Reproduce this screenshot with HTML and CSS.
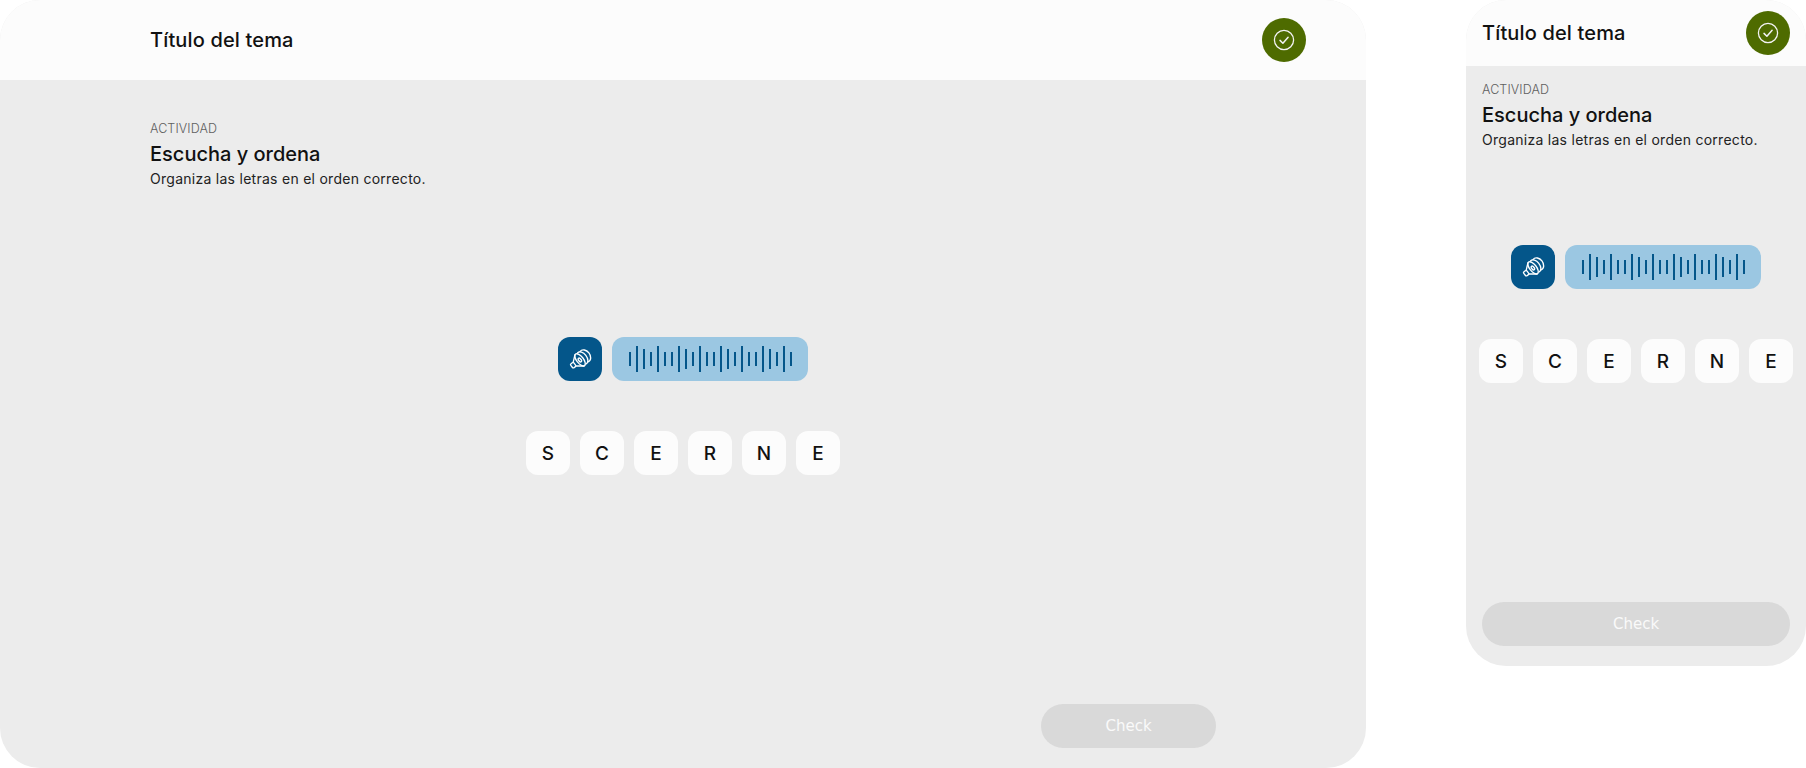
FILE: index.html
```html
<!DOCTYPE html>
<html lang="es">
<head>
    <meta charset="UTF-8">
    <meta name="viewport" content="width=device-width, initial-scale=1.0">
    <title>Escucha y ordena</title>
    <link rel="stylesheet" href="styles.css">
</head>
<body>

    <!-- Desktop preview -->
    <section class="panel panel-desktop">
        <header class="panel-header">
            <h1 class="topic-title">Título del tema</h1>
            <span class="done-badge">
                <svg width="24" height="24" viewBox="0 0 24 24" fill="none" stroke="currentColor" stroke-linecap="round" stroke-linejoin="round">
                    <circle cx="12" cy="12" r="9.6" stroke-width="1.3"/>
                    <path d="M8 12.4l2.9 2.8 5.2-6" stroke-width="1.5"/>
                </svg>
            </span>
        </header>
        <div class="activity-text">
            <p class="activity-label">ACTIVIDAD</p>
            <h2 class="activity-title">Escucha y ordena</h2>
            <p class="activity-hint">Organiza las letras en el orden correcto.</p>
        </div>
        <div class="game">
            <div class="audio-row">
                <button class="audio-btn">
                    <svg width="27" height="27" viewBox="0 0 24 24" fill="none" stroke="currentColor" stroke-width="1.2" stroke-linecap="round" stroke-linejoin="round">
                        <g transform="rotate(-38 12 12)">
                            <rect x="2" y="9.800" width="3.500" height="4.400" rx="1"/>
                            <path d="M5.500 9.800L10.800 5.600M5.500 14.200l5.300 4.200"/>
                            <ellipse cx="11.500" cy="12" rx="3" ry="6.500"/>
                            <ellipse cx="11.300" cy="12" rx="1.100" ry="2"/>
                            <path d="M13.500 5.800C16 5.200 18 8.500 18 12s-2 6.800-4.500 6.200"/>
                            <path d="M16 6.200c3.200-1 5.500 2.500 5.500 5.800s-2.300 6.800-5.500 5.800"/>
                        </g>
                    </svg>
                </button>
                <div class="wave">
                    <i class="s"></i><i class="t"></i><i class="m"></i><i class="s"></i><i class="t"></i><i class="s"></i>
                    <i class="s"></i><i class="t"></i><i class="m"></i><i class="s"></i><i class="t"></i><i class="s"></i>
                    <i class="s"></i><i class="t"></i><i class="m"></i><i class="s"></i><i class="t"></i><i class="s"></i>
                    <i class="s"></i><i class="t"></i><i class="m"></i><i class="s"></i><i class="t"></i><i class="s"></i>
                </div>
            </div>
            <div class="letters">
                <span class="letter">S</span>
                <span class="letter">C</span>
                <span class="letter">E</span>
                <span class="letter">R</span>
                <span class="letter">N</span>
                <span class="letter">E</span>
            </div>
        </div>
        <div class="panel-footer">
            <button class="check-btn" disabled>Check</button>
        </div>
    </section>

    <!-- Mobile preview -->
    <section class="panel panel-mobile">
        <header class="panel-header">
            <h1 class="topic-title">Título del tema</h1>
            <span class="done-badge">
                <svg width="24" height="24" viewBox="0 0 24 24" fill="none" stroke="currentColor" stroke-linecap="round" stroke-linejoin="round">
                    <circle cx="12" cy="12" r="9.6" stroke-width="1.3"/>
                    <path d="M8 12.4l2.9 2.8 5.2-6" stroke-width="1.5"/>
                </svg>
            </span>
        </header>
        <div class="activity-text">
            <p class="activity-label">ACTIVIDAD</p>
            <h2 class="activity-title">Escucha y ordena</h2>
            <p class="activity-hint">Organiza las letras en el orden correcto.</p>
        </div>
        <div class="game">
            <div class="audio-row">
                <button class="audio-btn">
                    <svg width="27" height="27" viewBox="0 0 24 24" fill="none" stroke="currentColor" stroke-width="1.2" stroke-linecap="round" stroke-linejoin="round">
                        <g transform="rotate(-38 12 12)">
                            <rect x="2" y="9.800" width="3.500" height="4.400" rx="1"/>
                            <path d="M5.500 9.800L10.800 5.600M5.500 14.200l5.300 4.200"/>
                            <ellipse cx="11.500" cy="12" rx="3" ry="6.500"/>
                            <ellipse cx="11.300" cy="12" rx="1.100" ry="2"/>
                            <path d="M13.500 5.800C16 5.200 18 8.500 18 12s-2 6.800-4.500 6.200"/>
                            <path d="M16 6.200c3.200-1 5.500 2.500 5.500 5.800s-2.300 6.800-5.500 5.800"/>
                        </g>
                    </svg>
                </button>
                <div class="wave">
                    <i class="s"></i><i class="t"></i><i class="m"></i><i class="s"></i><i class="t"></i><i class="s"></i>
                    <i class="s"></i><i class="t"></i><i class="m"></i><i class="s"></i><i class="t"></i><i class="s"></i>
                    <i class="s"></i><i class="t"></i><i class="m"></i><i class="s"></i><i class="t"></i><i class="s"></i>
                    <i class="s"></i><i class="t"></i><i class="m"></i><i class="s"></i><i class="t"></i><i class="s"></i>
                </div>
            </div>
            <div class="letters">
                <span class="letter">S</span>
                <span class="letter">C</span>
                <span class="letter">E</span>
                <span class="letter">R</span>
                <span class="letter">N</span>
                <span class="letter">E</span>
            </div>
        </div>
        <div class="panel-footer">
            <button class="check-btn" disabled>Check</button>
        </div>
    </section>

</body>
</html>
```

FILE: styles.css
```css
body {
    margin: 0;
    height: 768px;
    overflow: hidden;
    display: flex;
    justify-content: space-between;
    align-items: flex-start;
    background-color: #ffffff;
    color: #111111;
    font-family: Inter, sans-serif;
}
h1, h2, p {
    margin: 0;
    font-weight: normal;
}
.panel {
    display: flex;
    flex-direction: column;
    background-color: #ececec;
    border-radius: 40px;
    overflow: hidden;
}
.panel-desktop {
    width: 1366px;
    height: 768px;
}
.panel-mobile {
    width: 340px;
    height: 666px;
}
.panel-header {
    display: flex;
    align-items: center;
    justify-content: space-between;
    flex-shrink: 0;
    background-color: #fcfcfc;
}
.panel-desktop .panel-header {
    height: 80px;
    padding: 0 60px 0 150px;
}
.panel-mobile .panel-header {
    height: 66px;
    padding: 0 16px;
}
.topic-title {
    font-size: 20px;
    font-weight: 500;
    line-height: 26px;
    letter-spacing: 0.15px;
}
.done-badge {
    display: flex;
    align-items: center;
    justify-content: center;
    width: 44px;
    height: 44px;
    border-radius: 50%;
    background-color: #4e6b00;
    color: #f2f2f2;
}
.activity-text {
    display: flex;
    flex-direction: column;
}
.panel-desktop .activity-text {
    padding: 41px 150px 0;
}
.panel-mobile .activity-text {
    padding: 16px 16px 0;
}
.activity-label {
    font-size: 12.5px;
    font-weight: 300;
    line-height: 16px;
    letter-spacing: 0.1px;
    color: #5f5f5f;
}
.activity-title {
    margin-top: 4px;
    font-size: 20px;
    font-weight: 500;
    line-height: 26px;
}
.activity-hint {
    margin-top: 2px;
    font-size: 14px;
    line-height: 20px;
    letter-spacing: 0.27px;
    color: #222222;
}
.game {
    display: flex;
    flex-direction: column;
    align-items: center;
    gap: 50px;
}
.panel-desktop .game {
    margin-top: 148px;
}
.panel-mobile .game {
    margin-top: 95px;
}
.audio-row {
    display: flex;
    gap: 10px;
}
.audio-btn {
    display: flex;
    align-items: center;
    justify-content: center;
    width: 44px;
    height: 44px;
    padding: 0;
    border: none;
    border-radius: 12px;
    background-color: #04568a;
    color: #ffffff;
}
.wave {
    display: flex;
    align-items: center;
    justify-content: center;
    gap: 5px;
    width: 196px;
    height: 44px;
    border-radius: 12px;
    background-color: #9bc7e2;
}
.wave i {
    display: block;
    width: 2px;
    background-color: #04568a;
}
.wave .s { height: 14px; }
.wave .m { height: 20px; }
.wave .t { height: 26px; }
.letters {
    display: flex;
    gap: 10px;
}
.letter {
    display: flex;
    align-items: center;
    justify-content: center;
    width: 44px;
    height: 44px;
    border-radius: 12px;
    background-color: #fcfcfc;
    font-size: 19px;
    font-weight: 500;
}
.panel-footer {
    display: flex;
    justify-content: flex-end;
    margin-top: auto;
}
.panel-desktop .panel-footer {
    padding: 0 150px 20px;
}
.panel-mobile .panel-footer {
    padding: 0 16px 20px;
}
.check-btn {
    height: 44px;
    padding: 0;
    border: none;
    border-radius: 22px;
    background-color: #d9d9d9;
    color: #fafafa;
    font-family: "DejaVu Sans", sans-serif;
    font-size: 15px;
}
.panel-desktop .check-btn {
    width: 175px;
}
.panel-mobile .check-btn {
    width: 100%;
}
```
